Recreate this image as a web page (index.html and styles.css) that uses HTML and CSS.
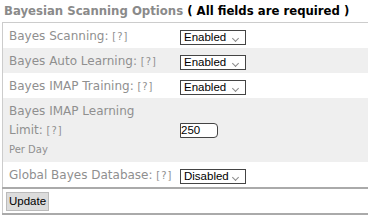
FILE: index.html
```html
<!DOCTYPE html>
<html>
<head>
  <title>Bayesian Scanning Options</title>
  <link rel="stylesheet" href="styles.css">
</head>
<body>
  <div class="options">
    <h3 class="title">Bayesian Scanning Options <span class="req">( All fields are required )</span></h3>
    <form id="bayes-form">
      <table class="opt-table">
        <tr>
          <td class="lbl">Bayes Scanning: <span class="help">[?]</span></td>
          <td><span class="sel-wrap"><select class="sel"><option>Enabled</option><option>Disabled</option></select></span></td>
        </tr>
        <tr class="alt">
          <td class="lbl">Bayes Auto Learning: <span class="help">[?]</span></td>
          <td><span class="sel-wrap"><select class="sel"><option>Enabled</option><option>Disabled</option></select></span></td>
        </tr>
        <tr>
          <td class="lbl">Bayes IMAP Training: <span class="help">[?]</span></td>
          <td><span class="sel-wrap"><select class="sel"><option>Enabled</option><option>Disabled</option></select></span></td>
        </tr>
        <tr class="alt tall">
          <td class="lbl">Bayes IMAP Learning<br>Limit: <span class="help">[?]</span><br><span class="note">Per Day</span></td>
          <td><input type="text" class="num" value="250"></td>
        </tr>
        <tr>
          <td class="lbl">Global Bayes Database: <span class="help">[?]</span></td>
          <td><span class="sel-wrap"><select class="sel"><option>Disabled</option><option>Enabled</option></select></span></td>
        </tr>
        <tr class="foot">
          <td colspan="2"><input type="submit" class="btn" value="Update"></td>
        </tr>
      </table>
    </form>
  </div>
</body>
</html>
```

FILE: styles.css
```css
body {
  margin: 0;
  background: #fff;
  font-family: "DejaVu Sans", Verdana, sans-serif;
}

.options {
  padding: 0 0 0 2px;
}

.title {
  margin: 0;
  padding: 2px 0 0 2px;
  font-family: "DejaVu Sans Condensed", "DejaVu Sans", sans-serif;
  font-stretch: condensed;
  font-size: 13px;
  font-weight: bold;
  color: #8a8a8a;
  line-height: 18px;
  height: 20px;
  white-space: nowrap;
}

.title .req {
  color: #000;
}

.opt-table {
  width: 366px;
  border-collapse: collapse;
  border-top: 1px solid #ccc;
  border-left: 1px solid #ccc;
  border-bottom: 2px solid #aaa;
}

.opt-table td {
  padding: 0 0 0 6px;
  height: 25px;
  font-size: 12px;
  color: #8f8f8f;
  vertical-align: middle;
  white-space: nowrap;
}

.opt-table td.lbl {
  width: 165px;
}

.opt-table tr.alt td {
  background: #efefef;
}

.opt-table tr.tall td {
  height: 63px;
  line-height: 19px;
  padding-top: 1px;
}

.help {
  font-family: "DejaVu Sans Condensed", "DejaVu Sans", sans-serif;
  font-size: 11px;
  letter-spacing: 1px;
}

.note {
  font-size: 10px;
}

.sel-wrap {
  position: relative;
  display: inline-block;
  margin-top: 4px;
}

.sel-wrap::after {
  content: "";
  position: absolute;
  right: 8px;
  top: 6px;
  width: 4px;
  height: 4px;
  border-right: 1px solid #8a8a8a;
  border-bottom: 1px solid #8a8a8a;
  transform: rotate(45deg);
  pointer-events: none;
}

.sel {
  appearance: none;
  -webkit-appearance: none;
  font-family: "Liberation Sans", Arial, sans-serif;
  font-size: 11.5px;
  width: 66px;
  height: 15px;
  line-height: 13px;
  padding: 0 0 0 3px;
  border: 1px solid #444;
  border-radius: 0;
  background: #fff;
  color: #000;
  display: block;
}

.num {
  font-family: "Liberation Sans", Arial, sans-serif;
  font-size: 11.5px;
  width: 35px;
  height: 13px;
  padding: 0 1px 0 0;
  border: 1px solid #444;
  border-radius: 0 4px 4px 0;
  margin-top: 2px;
}

.opt-table tr.foot td {
  border-top: 2px solid #aaa;
  height: 24px;
  padding: 0 0 0 3px;
}

.btn {
  font-family: "Liberation Sans", Arial, sans-serif;
  font-size: 11.5px;
  height: 19px;
  padding: 0 2px;
  background: #dcdcdc;
  border: 1px solid #bbb;
  border-radius: 0;
  color: #000;
}
```
